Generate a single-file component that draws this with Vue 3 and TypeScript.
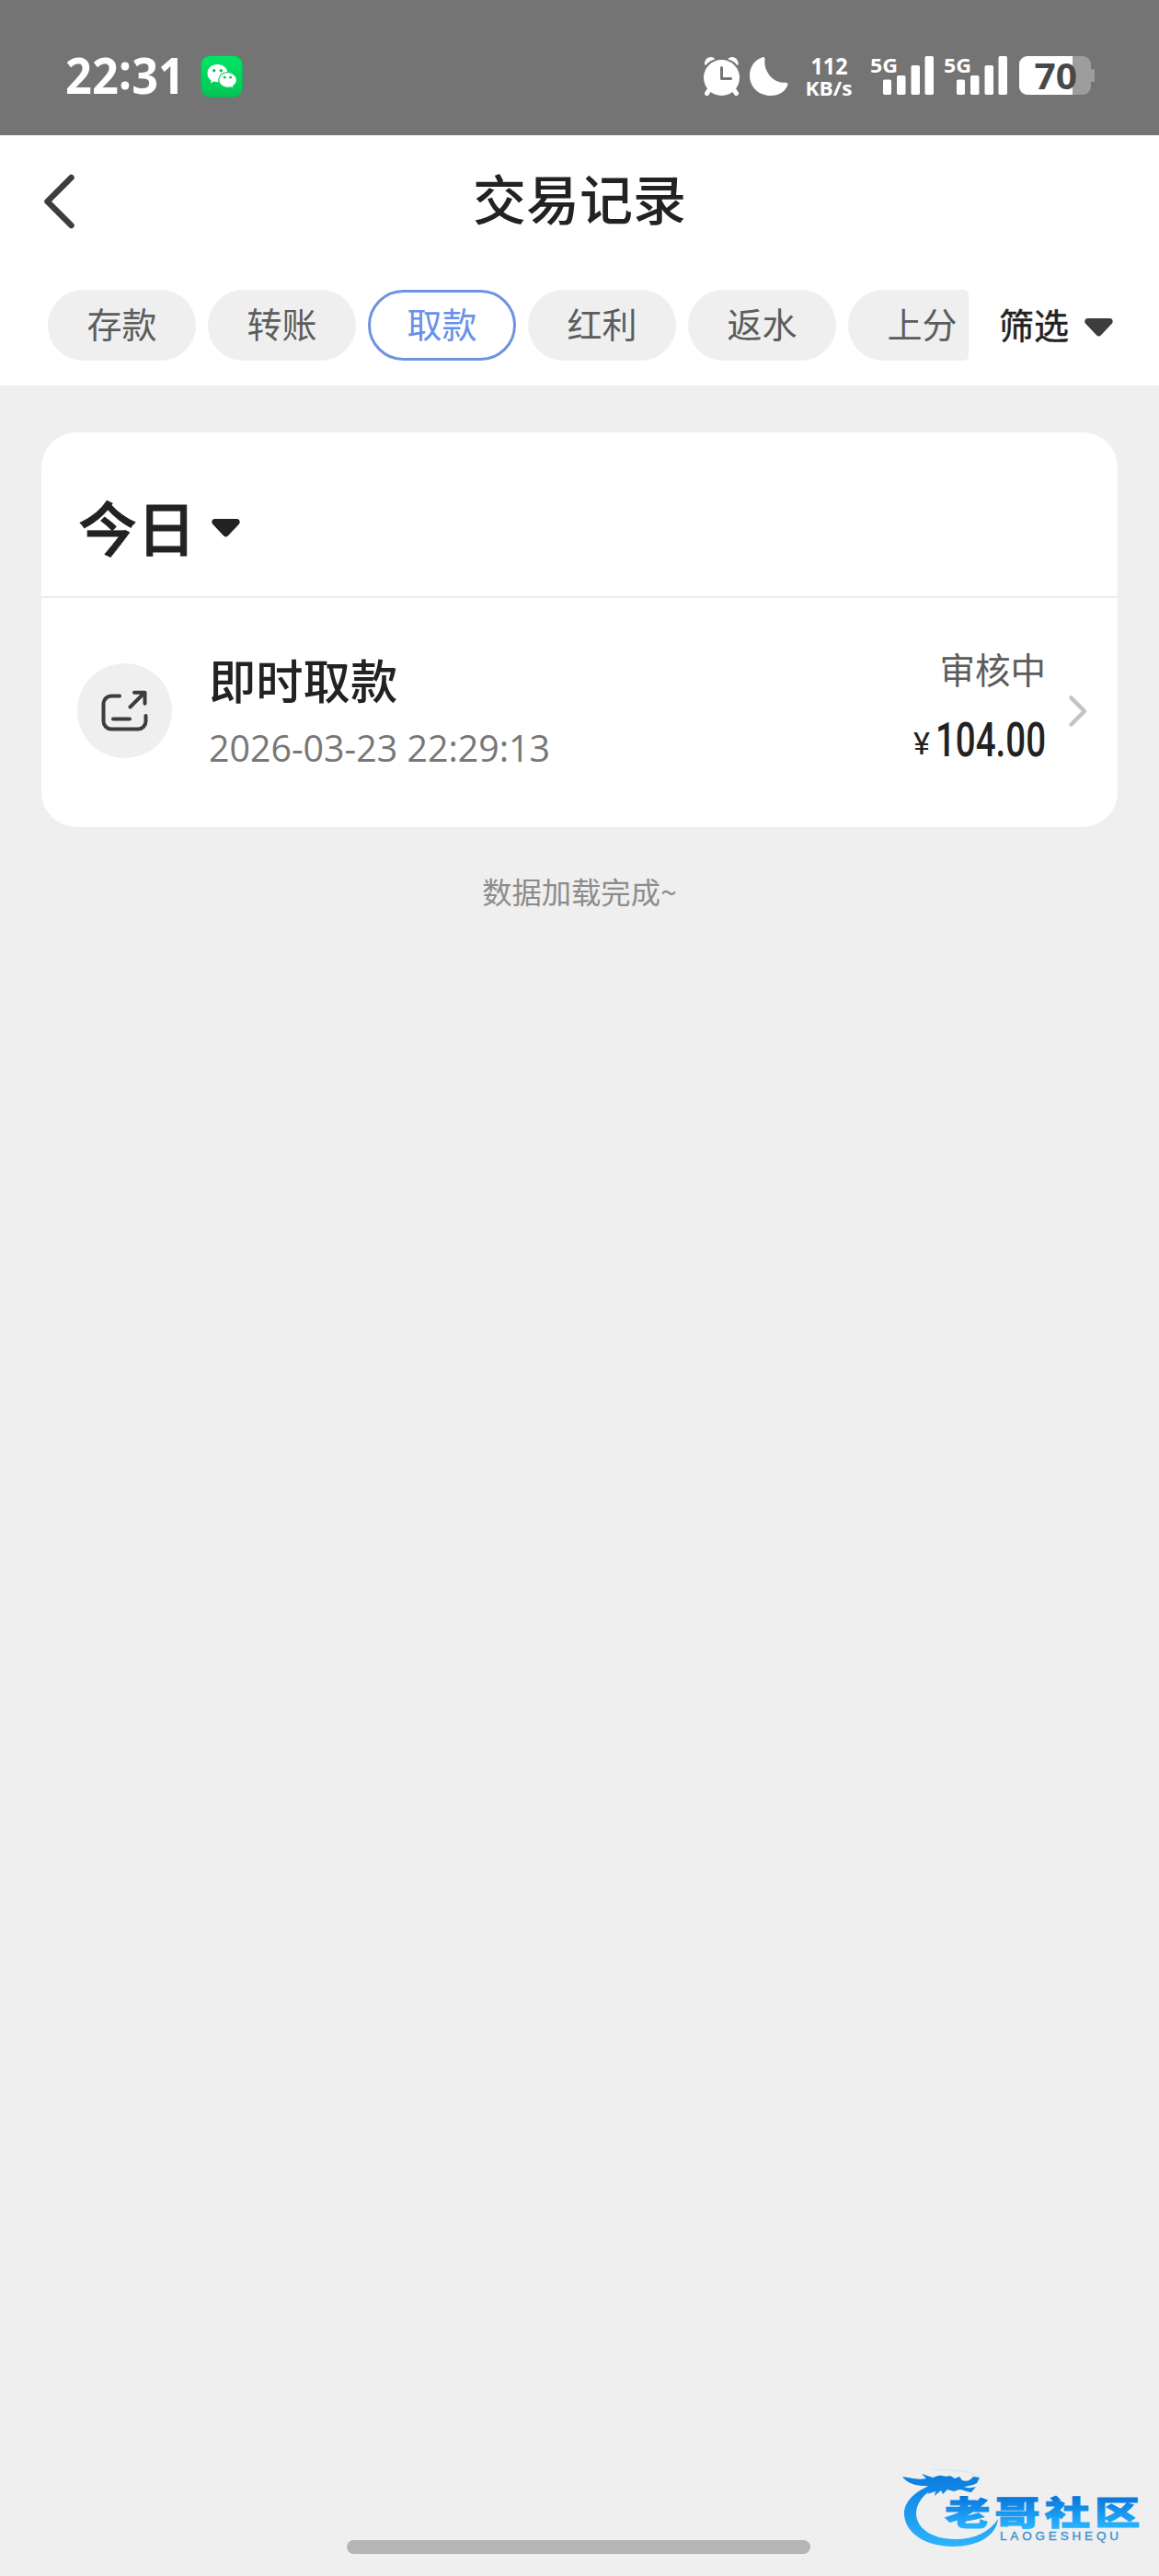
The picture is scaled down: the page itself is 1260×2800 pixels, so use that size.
<script setup lang="ts">
interface Tab {
  label: string
  active?: boolean
}

interface RecordItem {
  title: string
  time: string
  status: string
  amount: string
}

const tabs: Tab[] = [
  { label: '存款' },
  { label: '转账' },
  { label: '取款', active: true },
  { label: '红利' },
  { label: '返水' },
  { label: '上分' },
]

const records: RecordItem[] = [
  { title: '即时取款', time: '2026-03-23 22:29:13', status: '审核中', amount: '104.00' },
]

const signals: number[] = [0, 80]
</script>

<template>
  <div class="page">
    <header class="status">
      <svg width="1260" height="147" viewBox="0 0 1260 147">
        <defs>
          <linearGradient id="chat" x1="0" y1="0" x2="0" y2="1">
            <stop offset="0" stop-color="#02e765" />
            <stop offset="1" stop-color="#04c453" />
          </linearGradient>
        </defs>
        <text class="latin" x="71" y="102" font-size="53.5" font-weight="700" fill="#fff" textLength="130" lengthAdjust="spacingAndGlyphs">22<tspan dy="-5">:</tspan><tspan dy="5">31</tspan></text>

        <!-- chat app badge -->
        <rect x="218.500" y="60.500" width="45" height="45" rx="10" fill="url(#chat)" stroke="#0fb45c" />
        <path d="M236.500 70c-6.300 0-11 4.200-11 9.700 0 3.200 1.500 5.800 4.100 7.700l-.7 3 3.500-1.800c1.300.4 2.700.6 4.100.6 6.200 0 11-4.200 11-9.500S242.700 70 236.500 70z" fill="#fff" />
        <path d="M247.500 78.600c-5.500 0-9.800 3.700-9.800 8.300s4.300 8.400 9.800 8.400c1.200 0 2.400-.2 3.500-.5l3.100 1.500-.7-2.700c2.500-1.600 4-4 4-6.700 0-4.600-4.400-8.300-9.900-8.300z" fill="#fff" stroke="#05d65c" stroke-width="1.200" />
        <g fill="#05c556">
          <circle cx="232.700" cy="76.700" r="1.700" /><circle cx="240.300" cy="76.700" r="1.700" />
          <circle cx="244.200" cy="84.200" r="1.400" /><circle cx="250.600" cy="84.200" r="1.400" />
        </g>

        <!-- alarm -->
        <g fill="none" stroke="#fff" stroke-width="5" stroke-linecap="round">
          <path d="M773 95l-4.500 6.500M796 95l4.500 6.500" />
        </g>
        <path d="M766 69.500c0-4.500 3-7.500 7-7.500 2.200 0 3.800 1 4.200 2.400-4.500 1.100-7.700 3.300-10 6.600-.8-.3-1.200-.8-1.200-1.500zM802.700 69.500c0-4.500-3-7.500-7-7.500-2.200 0-3.800 1-4.200 2.400 4.500 1.100 7.700 3.300 10 6.600.8-.3 1.200-.8 1.200-1.500z" fill="#fff" />
        <circle cx="784.500" cy="84.500" r="19.500" fill="#fff" />
        <path d="M784.500 73.500v12h10" fill="none" stroke="#747474" stroke-width="3" stroke-linecap="round" stroke-linejoin="round" />

        <!-- do not disturb -->
        <path d="M829 62.200c1.600-.5 2.800.6 2.500 2.200-1.800 13.200 9.700 26.600 22.500 25.300 1.800-.1 2.900 1.200 2.300 3-3.100 7-9.600 11.300-18.300 11.300-13 0-23-9.500-23-21.800 0-9.400 5.300-17.200 14-20z" fill="#fff" />

        <g class="latin" fill="#fff" font-weight="700">
          <text x="881.500" y="81" font-size="25.500" textLength="40" lengthAdjust="spacingAndGlyphs">112</text>
          <text x="875.500" y="103.500" font-size="21.500" textLength="51" lengthAdjust="spacingAndGlyphs">KB/s</text>
        </g>

        <g v-for="dx in signals" :key="dx" :transform="`translate(${dx} 0)`" fill="#fff">
          <text class="latin" x="946" y="78.500" font-size="22" font-weight="700" textLength="30" lengthAdjust="spacingAndGlyphs">5G</text>
          <rect x="960" y="86.500" width="9" height="16.500" rx="1.800" />
          <rect x="975" y="82" width="9.500" height="21" rx="1.800" />
          <rect x="990.500" y="71" width="9.500" height="32" rx="1.800" />
          <rect x="1005.500" y="61" width="9.500" height="42" rx="1.800" />
        </g>

        <rect x="1108" y="61" width="78" height="42" rx="9" fill="#9d9d9d" />
        <rect x="1186" y="75" width="4" height="14" rx="1" fill="#9d9d9d" />
        <path d="M1117 61h49v42h-49a9 9 0 0 1-9-9V70a9 9 0 0 1 9-9z" fill="#fff" />
        <text class="latin" x="1124.500" y="96.500" font-size="40" font-weight="700" fill="#484848" textLength="46.500" lengthAdjust="spacingAndGlyphs">70</text>
      </svg>
    </header>

    <section class="top">
      <div class="nav">
        <svg class="back" width="40" height="64" viewBox="0 0 40 64">
          <path d="M32.500 6L6.500 32L32.500 58" fill="none" stroke="#3d3d3d" stroke-width="6.500" stroke-linecap="round" stroke-linejoin="round" />
        </svg>
        <h1>交易记录</h1>
      </div>
      <div class="filters">
        <div class="tabs">
          <span v-for="tab in tabs" :key="tab.label" class="tab" :class="{ active: tab.active }">{{ tab.label }}</span>
        </div>
        <div class="sift">
          <span>筛选</span>
          <svg width="31" height="20" viewBox="0 0 31 20"><path d="M3.500 0h24c3 0 4.200 3.500 2.300 5.800L18 18.300c-1.500 1.700-3.500 1.700-5 0L1.200 5.800C-.7 3.500.5 0 3.500 0z" fill="#3d3d3d" /></svg>
        </div>
      </div>
    </section>

    <main class="card">
      <div class="day">
        <span>今日</span>
        <svg width="31" height="20" viewBox="0 0 31 20"><path d="M3.500 0h24c3 0 4.200 3.500 2.300 5.800L18 18.300c-1.500 1.700-3.500 1.700-5 0L1.200 5.800C-.7 3.500.5 0 3.500 0z" fill="#222" /></svg>
      </div>
      <div v-for="item in records" :key="item.time" class="record">
        <span class="badge">
          <svg width="52" height="46" viewBox="0 0 52 46" fill="none" stroke="#3d3d3d" stroke-width="4" stroke-linecap="round" stroke-linejoin="round">
            <path d="M20 6.500H11a8.500 8.500 0 0 0-8.500 8.500v19a8.500 8.500 0 0 0 8.500 8.500h29a8.500 8.500 0 0 0 8.500-8.500v-6M13 31.500h18M31.500 18.500L47 3M36 2.800h11.500v12" />
          </svg>
        </span>
        <div class="info">
          <strong>{{ item.title }}</strong>
          <svg width="380" height="44" viewBox="0 0 380 44">
            <text class="latin" x="0" y="37" font-size="40.500" fill="#777" textLength="371" lengthAdjust="spacingAndGlyphs">{{ item.time }}</text>
          </svg>
        </div>
        <div class="result">
          <span class="state">{{ item.status }}</span>
          <svg width="146" height="48" viewBox="0 0 146 48" fill="#222">
            <text class="num" x="2" y="41" font-size="33" textLength="18" lengthAdjust="spacingAndGlyphs">¥</text>
            <text class="num" x="26" y="43" font-size="51" font-weight="500" textLength="120" lengthAdjust="spacingAndGlyphs">{{ item.amount }}</text>
          </svg>
        </div>
        <svg class="go" width="20" height="34" viewBox="0 0 20 34">
          <path d="M2.500 2.500L17 17L2.500 31.500" fill="none" stroke="#c4c4c4" stroke-width="4.500" stroke-linecap="round" stroke-linejoin="round" />
        </svg>
      </div>
    </main>

    <p class="done">数据加载完成~</p>

    <div class="home"></div>

    <svg class="mark" width="280" height="100" viewBox="0 0 280 100">
      <defs>
        <linearGradient id="sea" gradientUnits="userSpaceOnUse" x1="0" y1="5" x2="0" y2="88">
          <stop offset="0" stop-color="#0878dc" />
          <stop offset="1" stop-color="#2cb4fb" />
        </linearGradient>
        <linearGradient id="word" gradientUnits="userSpaceOnUse" x1="0" y1="-30" x2="0" y2="3">
          <stop offset="0" stop-color="#0878dc" />
          <stop offset="1" stop-color="#26b4ff" />
        </linearGradient>
      </defs>
      <path d="M40 18C16 26 3 38 3 52c0 20 22 36 53 36 26 0 47-11 49-30-9 14-25 22-46 22-25 0-42-11-43-27 0-13 8-22 22-30l9-4z" fill="url(#sea)" />
      <path d="M1 12c8 1 15 4 26 2l-5-5 12 4 6-2c5-1 7 2 13 0l5 3 5-2 3 4c5 2 9 0 12-4l7 1-3 6c-5 3-10 3-14 4 5 2 9 1 13 0l-5 6c-5 0-9-3-13-3l-6 2-7-2-5 5-2-4-7 6 1-5-9 3 5-8-8-1c-8 0-18-2-24-10z" fill="url(#sea)" />
      <path d="M34 4c17 3 35-2 50 8" fill="none" stroke="#dbe8f1" stroke-width="1.500" />
      <text class="cjk" transform="translate(47 64.500) scale(1.370 1)" font-size="36" font-weight="900" letter-spacing="3.700" fill="url(#word)" stroke="url(#word)" stroke-width="1">老哥社区</text>
      <text x="107" y="80.500" class="roman" font-size="13.500" fill="#3d93cf" stroke="#3d93cf" stroke-width=".4" textLength="129">LAOGESHEQU</text>
    </svg>
  </div>
</template>

<style>
body {
  background: #efefef;
}
</style>

<style scoped>
.page {
  position: relative;
  display: flex;
  flex-direction: column;
  width: 1260px;
  height: 2800px;
  overflow: hidden;
  background: #efefef;
  font-family: "Noto Sans CJK SC", sans-serif;
  color: #222;
}
.page svg {
  display: block;
  flex: none;
  overflow: visible;
}
.latin {
  font-family: "Open Sans", "Noto Sans", sans-serif;
}
.num {
  font-family: Roboto, sans-serif;
}
.roman {
  font-family: "Liberation Sans", Arial, sans-serif;
}
.cjk {
  font-family: "Noto Sans CJK SC", sans-serif;
}
.status {
  height: 147px;
  background: #747474;
}
.top {
  height: 272px;
  background: #fff;
}
.nav {
  display: flex;
  align-items: center;
  height: 143px;
  padding-left: 45px;
}
h1 {
  flex: 1;
  margin: 0 85px 0 0;
  padding-bottom: 9px;
  text-align: center;
  font-size: 58px;
  line-height: 80px;
  font-weight: 500;
}
.filters {
  display: flex;
  align-items: center;
  margin-top: 25px;
  padding-left: 52px;
}
.tabs {
  display: flex;
  gap: 13px;
  width: 1001px;
  overflow: hidden;
  border-radius: 5px;
}
.tab {
  flex: none;
  box-sizing: border-box;
  width: 161px;
  height: 77px;
  border-radius: 38.500px;
  background: #efefef;
  color: #5c5c5c;
  font-size: 38px;
  line-height: 72px;
  text-align: center;
}
.tab.active {
  border: 3px solid #6f93e0;
  background: #fff;
  color: #6990ea;
  line-height: 66px;
}
.sift {
  display: flex;
  align-items: center;
  gap: 17px;
  margin-left: 33px;
  font-size: 38px;
  line-height: 72px;
}
.sift span {
  margin-top: -3px;
  -webkit-text-stroke: 0.5px #222;
}
.sift svg {
  margin-top: 4px;
}
.card {
  margin: 51px 45px 0;
  height: 429px;
  border-radius: 38px;
  background: #fff;
}
.day {
  display: flex;
  align-items: center;
  gap: 17px;
  box-sizing: border-box;
  height: 180px;
  padding: 23px 0 0 40px;
  border-bottom: 2px solid #ededed;
  font-size: 64px;
  line-height: 90px;
  font-weight: 500;
}
.day span {
  -webkit-text-stroke: 0.8px #222;
}
.day svg {
  margin-top: 7px;
}
.record {
  display: flex;
  align-items: center;
  height: 246px;
  padding: 0 33px 0 39px;
}
.badge {
  display: flex;
  align-items: center;
  justify-content: center;
  width: 103px;
  height: 103px;
  margin-bottom: 1px;
  border-radius: 50%;
  background: #efefef;
}
.info {
  margin-left: 40px;
  padding-bottom: 10px;
}
.info strong {
  display: block;
  margin-bottom: 16px;
  font-size: 51.300px;
  line-height: 74px;
  font-weight: 500;
}
.result {
  display: flex;
  flex-direction: column;
  align-items: flex-end;
  margin-left: auto;
  padding-bottom: 21px;
}
.state {
  font-size: 38.500px;
  line-height: 56px;
  color: #5c5c5c;
}
.result svg {
  margin-top: 25px;
}
.go {
  margin-left: 25px;
}
.done {
  margin: 45px 0 0;
  text-align: center;
  font-size: 32.300px;
  line-height: 48px;
  color: #8c8c8c;
}
.home {
  width: 504px;
  height: 15px;
  margin: auto auto 24px 377px;
  border-radius: 8px;
  background: #b5b5b5;
}
.mark {
  position: absolute;
  left: 980px;
  top: 2680px;
}
</style>
